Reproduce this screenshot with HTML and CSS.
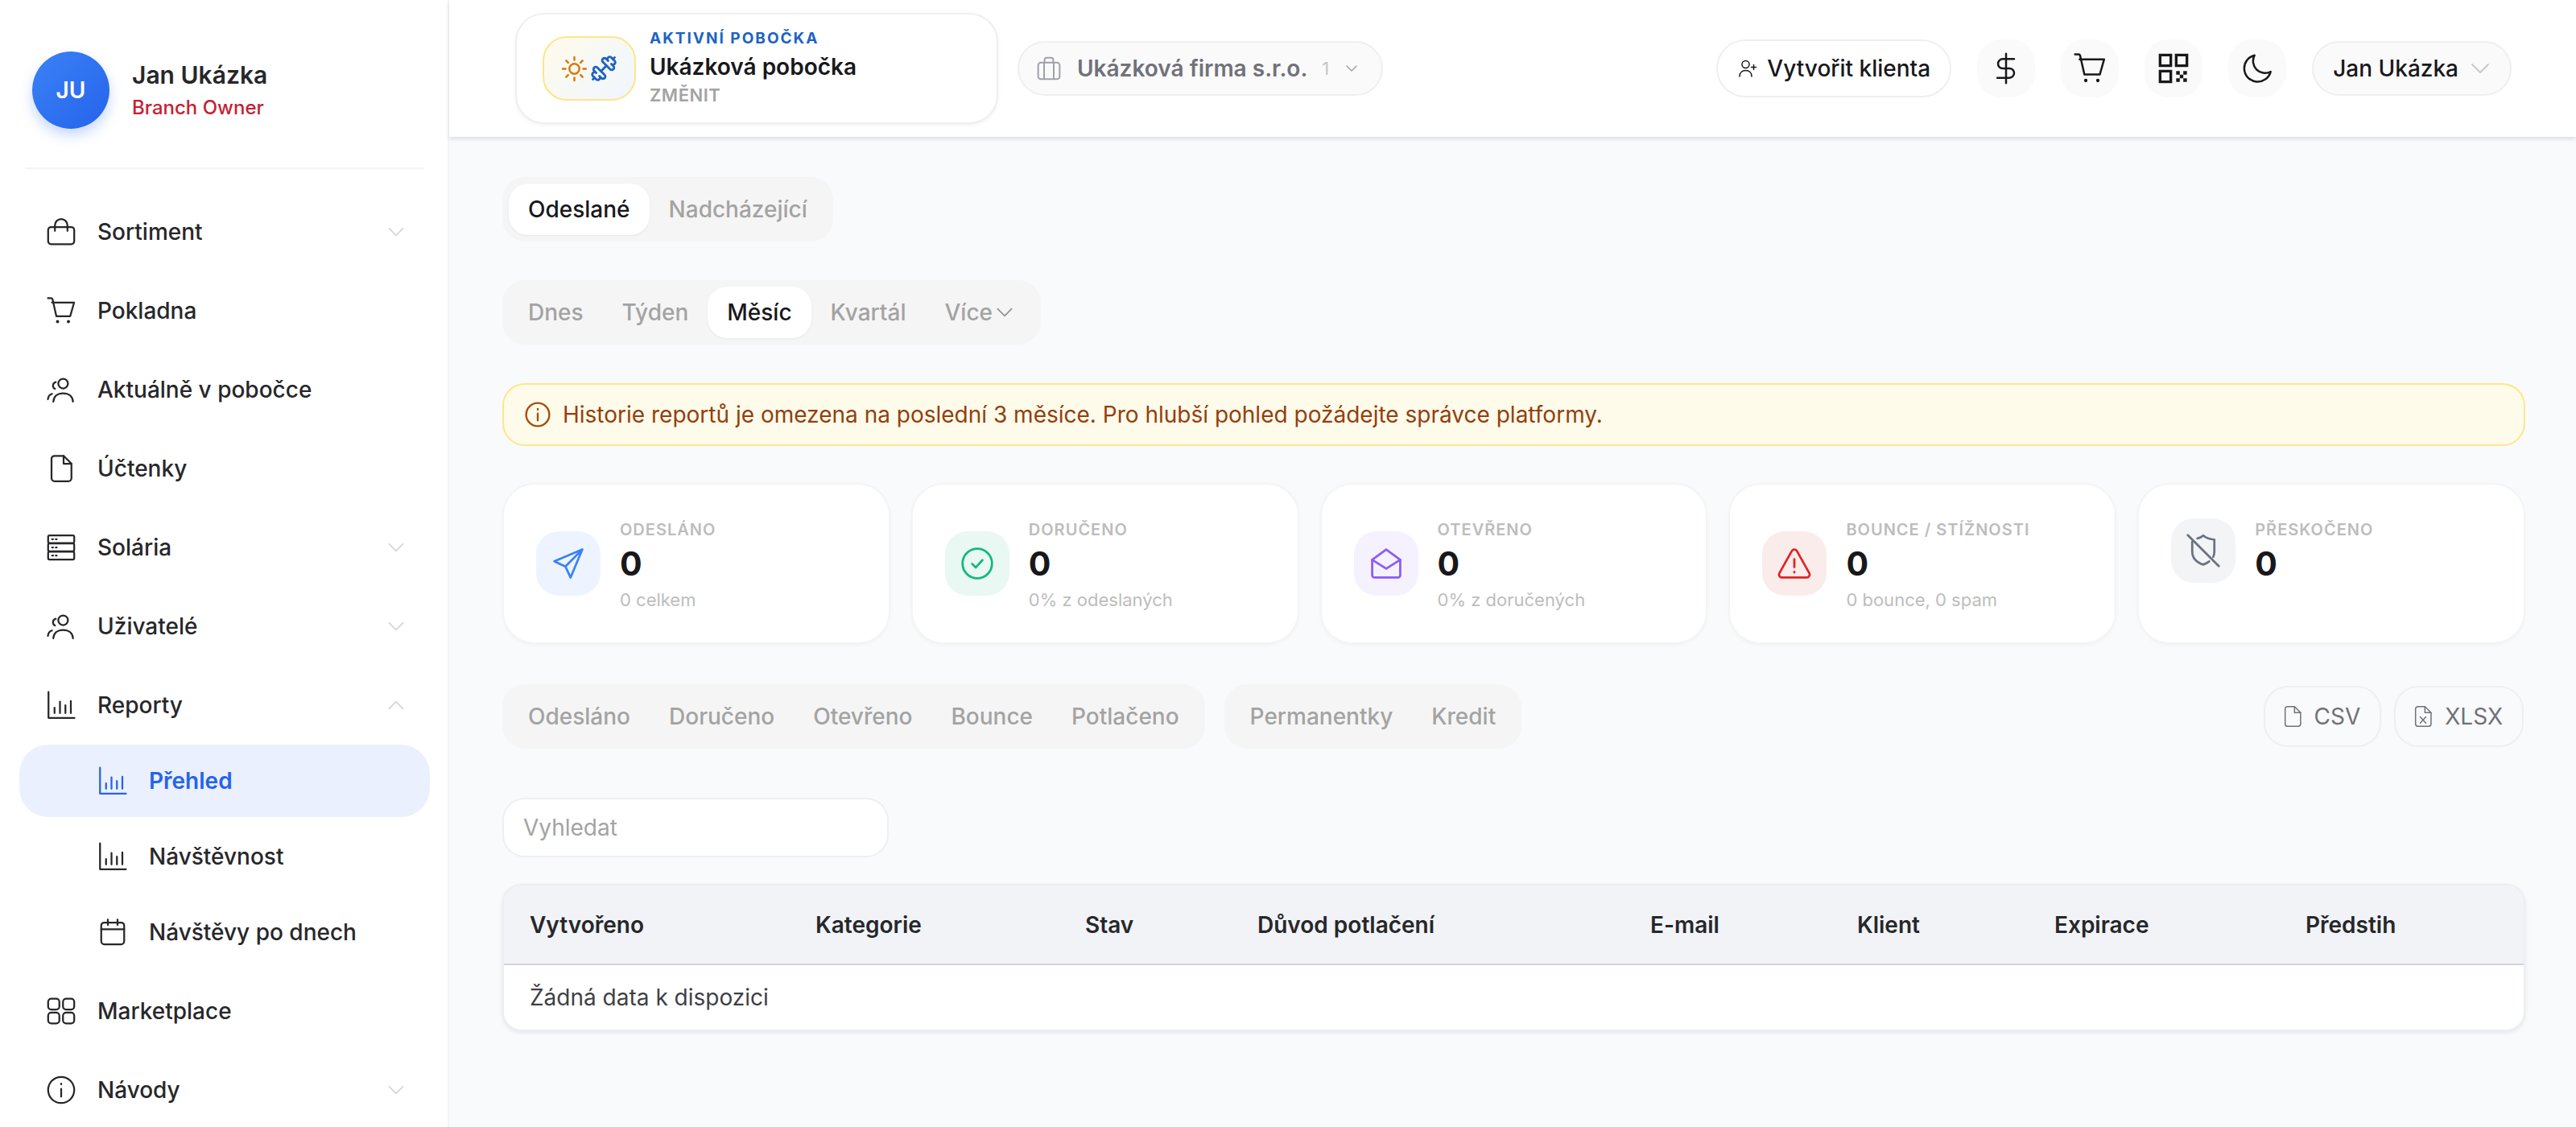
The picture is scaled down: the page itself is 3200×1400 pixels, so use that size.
FILE: index.html
```html
<!DOCTYPE html>
<html lang="cs">
<head>
    <meta charset="UTF-8">
    <title>Reporty</title>
    <link rel="stylesheet" href="styles.css">
</head>
<body>

    <svg class="defs" width="0" height="0">
        <symbol id="i-bag" viewBox="0 0 24 24"><rect x="1.2" y="8" width="21.6" height="14.2" rx="2.4"/><path d="M6.800 11.200V6.600a5.200 5.200 0 0 1 10.400 0v4.600"/></symbol>
        <symbol id="i-cart" viewBox="0 0 24 24"><path d="M1 1.500h2.600c.6 0 1 .3 1.200.9L8 16.500h11.500l3.200-11.300H4.400"/><circle cx="9" cy="21" r="1.300" class="dot"/><circle cx="18" cy="21" r="1.300" class="dot"/></symbol>
        <symbol id="i-users" viewBox="0 0 24 24"><circle cx="13.600" cy="7" r="4"/><path d="M5.500 22c.3-4.600 3.600-7 8.100-7s7.900 2.400 8.200 7"/><path d="M7.500 5.800a3 3 0 0 0-.6 5.600"/><path d="M1 20c.2-2.400 1.400-3.900 3.400-4.500"/></symbol>
        <symbol id="i-file" viewBox="0 0 24 24"><path d="M4 4a2.500 2.500 0 0 1 2.500-2.500H14L20.500 8v12a2.500 2.500 0 0 1-2.500 2.500H6.500A2.500 2.500 0 0 1 4 20z"/><path d="M14 1.500V8h6.500"/></symbol>
        <symbol id="i-server" viewBox="0 0 24 24"><rect x="1.200" y="2" width="21.600" height="6.400" rx="1.200"/><rect x="1.200" y="8.800" width="21.600" height="6.400" rx="1.200"/><rect x="1.200" y="15.600" width="21.600" height="6.400" rx="1.200"/><path d="M4.500 5.200h.8M7.500 5.200h.8M4.500 12h.8M7.500 12h.8M4.500 18.800h.8M7.500 18.800h.8"/></symbol>
        <symbol id="i-chart" viewBox="0 0 24 24"><path d="M1.500 1v21.500H23"/><path d="M6.500 14v4.500M11 9v9.500M15.500 12v6.500M20 8.500v10"/></symbol>
        <symbol id="i-calendar" viewBox="0 0 24 24"><rect x="2.500" y="4" width="19" height="18" rx="2.500"/><path d="M2.500 9.500h19M8 1.500V6M16 1.500V6"/></symbol>
        <symbol id="i-grid" viewBox="0 0 24 24"><rect x="1.200" y="1.800" width="9.300" height="9" rx="2.600"/><rect x="13.500" y="1.800" width="9.300" height="9" rx="2.600"/><rect x="1.200" y="13.200" width="9.300" height="9" rx="2.600"/><rect x="13.500" y="13.200" width="9.300" height="9" rx="2.600"/></symbol>
        <symbol id="i-info" viewBox="0 0 24 24"><circle cx="12" cy="12" r="10.800"/><path d="M12 11v6.500M12 6.800v.6"/></symbol>
        <symbol id="i-dollar" viewBox="0 0 24 24"><path d="M12 1v22M18 5H9.500a3.500 3.500 0 0 0 0 7h5a3.500 3.500 0 0 1 0 7H5.500"/></symbol>
        <symbol id="i-moon" viewBox="0 0 24 24"><path d="M22 14.500A10 10 0 1 1 10 2.200a9 9 0 0 0 12 12.300z"/></symbol>
        <symbol id="i-qr" viewBox="0 0 24 24"><path d="M2 2h8v8H2zM14 2h8v8h-8zM2 14h8v8H2z" class="square"/><path d="M14 14h2.700v2.700H14zM19.300 14H22v2.700h-2.700zM16.700 16.700h2.600v2.600h-2.600zM14 19.300h2.700V22H14zM19.300 19.300H22V22h-2.700z" class="dot"/></symbol>
        <symbol id="i-chevron" viewBox="0 0 24 24"><path d="M4 8l8 8 8-8"/></symbol>
        <symbol id="i-briefcase" viewBox="0 0 24 24"><rect x="2" y="6.500" width="20" height="15.500" rx="2.500"/><path d="M8 6.500V4a2 2 0 0 1 2-2h4a2 2 0 0 1 2 2v2.500M7.500 6.500V22M16.500 6.500V22"/></symbol>
        <symbol id="i-userplus" viewBox="0 0 24 24"><circle cx="9.500" cy="7" r="4.500"/><path d="M2 22c0-4.600 3-7.500 7.500-7.500s7.500 2.900 7.500 7.500M19.500 7.500v6M16.500 10.500h6"/></symbol>
        <symbol id="i-send" viewBox="0 0 24 24"><path d="M21.500 2.500 2.500 10.500l7.500 3.500 3.500 7.500zM21.500 2.500 10 14"/></symbol>
        <symbol id="i-check" viewBox="0 0 24 24"><circle cx="12" cy="12" r="10"/><path d="M8.500 12.200l2.500 2.500 4.500-5"/></symbol>
        <symbol id="i-mail" viewBox="0 0 24 24"><path d="M2.500 9.500 12 2.500l9.500 7V20a1.500 1.500 0 0 1-1.500 1.500H4A1.500 1.500 0 0 1 2.500 20z"/><path d="M2.500 9.500 12 15.500l9.500-6"/></symbol>
        <symbol id="i-alert" viewBox="0 0 24 24"><path d="M10.300 3.500 1.900 18.500A2 2 0 0 0 3.600 21.500h16.800a2 2 0 0 0 1.700-3L13.700 3.500a2 2 0 0 0-3.400 0z"/><path d="M12 9v5.500M12 17.600v.4"/></symbol>
        <symbol id="i-shield" viewBox="0 0 24 24"><path d="M8 3.800c1.500-.3 2.900-1 4-2 2.300 2 4.600 2.600 7.500 2.700v8c0 1.400-.2 2.700-.8 3.800M16 19.300c-1.100.9-2.500 1.700-4 2.200-4.400-1.500-7.500-4.500-7.500-9V6"/><path d="M1.500 1.500l21 21"/></symbol>
        <symbol id="i-filex" viewBox="0 0 24 24"><path d="M4 4a2.500 2.500 0 0 1 2.500-2.500H14L20.500 8v12a2.500 2.500 0 0 1-2.500 2.500H6.500A2.500 2.500 0 0 1 4 20z"/><path d="M14 1.500V8h6.500M9 12.500l6 6.500M15 12.500l-6 6.500"/></symbol>
        <symbol id="i-sun" viewBox="0 0 24 24"><circle cx="12" cy="12" r="4.500"/><path d="M12 1.500v2.500M12 20v2.500M1.500 12H4M20 12h2.500M4.600 4.600l1.800 1.800M17.600 17.600l1.800 1.800M4.600 19.400l1.800-1.800M17.600 6.400l1.800-1.800"/></symbol>
        <symbol id="i-dumbbell" viewBox="0 0 24 24"><g transform="matrix(-1 0 0 1 24 0)"><path d="M14.400 14.400 9.600 9.600"/><path d="M18.657 21.485a2 2 0 1 1-2.829-2.828l-1.767 1.768a2 2 0 1 1-2.829-2.829l6.364-6.364a2 2 0 1 1 2.829 2.829l-1.768 1.767a2 2 0 1 1 2.828 2.829z"/><path d="m21.500 21.500-1.400-1.400M3.900 3.900 2.500 2.500"/><path d="M6.404 12.768a2 2 0 1 1-2.829-2.829l1.768-1.767a2 2 0 1 1-2.828-2.829l2.828-2.828a2 2 0 1 1 2.829 2.828l1.767-1.768a2 2 0 1 1 2.829 2.829z"/></g></symbol>
    </svg>

    <div class="app">
        <aside class="sidebar">
            <div class="profile">
                <div class="avatar">JU</div>
                <div>
                    <div class="profile-name">Jan Ukázka</div>
                    <div class="profile-role">Branch Owner</div>
                </div>
            </div>

            <nav class="nav">
                <a class="nav-item"><svg class="icon"><use href="#i-bag"/></svg><span>Sortiment</span><svg class="nav-chevron"><use href="#i-chevron"/></svg></a>
                <a class="nav-item"><svg class="icon"><use href="#i-cart"/></svg><span>Pokladna</span></a>
                <a class="nav-item"><svg class="icon"><use href="#i-users"/></svg><span>Aktuálně v pobočce</span></a>
                <a class="nav-item"><svg class="icon"><use href="#i-file"/></svg><span>Účtenky</span></a>
                <a class="nav-item"><svg class="icon"><use href="#i-server"/></svg><span>Solária</span><svg class="nav-chevron"><use href="#i-chevron"/></svg></a>
                <a class="nav-item"><svg class="icon"><use href="#i-users"/></svg><span>Uživatelé</span><svg class="nav-chevron"><use href="#i-chevron"/></svg></a>
                <a class="nav-item"><svg class="icon"><use href="#i-chart"/></svg><span>Reporty</span><svg class="nav-chevron open"><use href="#i-chevron"/></svg></a>
                <div class="subnav">
                    <a class="nav-item sub active"><svg class="icon"><use href="#i-chart"/></svg><span>Přehled</span></a>
                    <a class="nav-item sub"><svg class="icon"><use href="#i-chart"/></svg><span>Návštěvnost</span></a>
                    <a class="nav-item sub"><svg class="icon"><use href="#i-calendar"/></svg><span>Návštěvy po dnech</span></a>
                </div>
                <a class="nav-item"><svg class="icon"><use href="#i-grid"/></svg><span>Marketplace</span></a>
                <a class="nav-item"><svg class="icon"><use href="#i-info"/></svg><span>Návody</span><svg class="nav-chevron"><use href="#i-chevron"/></svg></a>
            </nav>
        </aside>

        <div class="page">
            <header class="topbar">
                <div class="branch-card">
                    <div class="branch-logo">
                        <svg class="logo-sun"><use href="#i-sun"/></svg>
                        <svg class="logo-gym"><use href="#i-dumbbell"/></svg>
                    </div>
                    <div class="branch-text">
                        <div class="branch-label">AKTIVNÍ POBOČKA</div>
                        <div class="branch-name">Ukázková pobočka</div>
                        <div class="branch-change">ZMĚNIT</div>
                    </div>
                </div>
                <div class="company">
                    <svg class="company-icon"><use href="#i-briefcase"/></svg>
                    <span>Ukázková firma s.r.o.</span>
                    <span class="company-count">1</span>
                    <svg class="company-chevron"><use href="#i-chevron"/></svg>
                </div>

                <div class="topbar-right">
                    <button class="create-btn"><svg class="create-icon"><use href="#i-userplus"/></svg>Vytvořit klienta</button>
                    <button class="round-btn"><svg><use href="#i-dollar"/></svg></button>
                    <button class="round-btn"><svg><use href="#i-cart"/></svg></button>
                    <button class="round-btn"><svg><use href="#i-qr"/></svg></button>
                    <button class="round-btn"><svg><use href="#i-moon"/></svg></button>
                    <button class="user-btn">Jan Ukázka<svg class="user-chevron"><use href="#i-chevron"/></svg></button>
                </div>
            </header>

            <main class="content">
                <div class="tabs">
                    <span class="tab selected">Odeslané</span>
                    <span class="tab">Nadcházející</span>
                </div>

                <div class="tabs period">
                    <span class="tab">Dnes</span>
                    <span class="tab">Týden</span>
                    <span class="tab selected">Měsíc</span>
                    <span class="tab">Kvartál</span>
                    <span class="tab">Více<svg class="tab-chevron"><use href="#i-chevron"/></svg></span>
                </div>

                <div class="notice">
                    <svg class="notice-icon"><use href="#i-info"/></svg>
                    Historie reportů je omezena na poslední 3 měsíce. Pro hlubší pohled požádejte správce platformy.
                </div>

                <div class="stats">
                    <div class="stat">
                        <div class="stat-icon blue"><svg><use href="#i-send"/></svg></div>
                        <div>
                            <div class="stat-label">ODESLÁNO</div>
                            <div class="stat-value">0</div>
                            <div class="stat-sub">0 celkem</div>
                        </div>
                    </div>
                    <div class="stat">
                        <div class="stat-icon green"><svg><use href="#i-check"/></svg></div>
                        <div>
                            <div class="stat-label">DORUČENO</div>
                            <div class="stat-value">0</div>
                            <div class="stat-sub">0% z odeslaných</div>
                        </div>
                    </div>
                    <div class="stat">
                        <div class="stat-icon purple"><svg><use href="#i-mail"/></svg></div>
                        <div>
                            <div class="stat-label">OTEVŘENO</div>
                            <div class="stat-value">0</div>
                            <div class="stat-sub">0% z doručených</div>
                        </div>
                    </div>
                    <div class="stat">
                        <div class="stat-icon red"><svg><use href="#i-alert"/></svg></div>
                        <div>
                            <div class="stat-label">BOUNCE / STÍŽNOSTI</div>
                            <div class="stat-value">0</div>
                            <div class="stat-sub">0 bounce, 0 spam</div>
                        </div>
                    </div>
                    <div class="stat">
                        <div class="stat-icon gray"><svg><use href="#i-shield"/></svg></div>
                        <div>
                            <div class="stat-label">PŘESKOČENO</div>
                            <div class="stat-value">0</div>
                        </div>
                    </div>
                </div>

                <div class="filters">
                    <div class="tabs">
                        <span class="tab">Odesláno</span>
                        <span class="tab">Doručeno</span>
                        <span class="tab">Otevřeno</span>
                        <span class="tab">Bounce</span>
                        <span class="tab">Potlačeno</span>
                    </div>
                    <div class="tabs">
                        <span class="tab">Permanentky</span>
                        <span class="tab">Kredit</span>
                    </div>
                    <div class="exports">
                        <button class="export-btn"><svg><use href="#i-file"/></svg>CSV</button>
                        <button class="export-btn"><svg><use href="#i-filex"/></svg>XLSX</button>
                    </div>
                </div>

                <input class="search" type="text" placeholder="Vyhledat">

                <div class="table-wrap">
                    <table class="table">
                        <thead>
                            <tr>
                                <th class="col-created">Vytvořeno</th>
                                <th class="col-category">Kategorie</th>
                                <th class="col-state">Stav</th>
                                <th class="col-reason">Důvod potlačení</th>
                                <th class="col-email">E-mail</th>
                                <th class="col-client">Klient</th>
                                <th class="col-expiry">Expirace</th>
                                <th>Předstih</th>
                            </tr>
                        </thead>
                        <tbody>
                            <tr><td colspan="8">Žádná data k dispozici</td></tr>
                        </tbody>
                    </table>
                </div>
            </main>
        </div>
    </div>

</body>
</html>
```

FILE: styles.css
```css
/* General */
* {
    box-sizing: border-box;
}

body {
    margin: 0;
    height: 100vh;
    overflow: hidden;
    font-family: "Inter", sans-serif;
    font-size: 28px;
    color: #18181b;
    background: #f9fafb;
}

button {
    font: inherit;
    color: inherit;
    cursor: pointer;
    white-space: nowrap;
}

svg {
    fill: none;
    stroke: currentColor;
    stroke-width: 1.5;
    stroke-linecap: round;
    stroke-linejoin: round;
    flex-shrink: 0;
}

.defs {
    position: absolute;
}

.dot {
    fill: currentColor;
    stroke: none;
}

.square {
    stroke-width: 2;
    stroke-linecap: butt;
    stroke-linejoin: miter;
}

.icon {
    width: 36px;
    height: 36px;
}

.app {
    display: flex;
    height: 100%;
}

/* Sidebar */
.sidebar {
    width: 558px;
    flex-shrink: 0;
    background: #fff;
    border-right: 2px solid #f4f4f5;
    overflow: hidden;
}

.profile {
    display: flex;
    align-items: center;
    gap: 28px;
    height: 146px;
    margin: 64px 30px 0 32px;
    padding: 0 0 48px 8px;
    border-bottom: 2px solid #f4f4f5;
}

.avatar {
    width: 96px;
    height: 96px;
    border-radius: 50%;
    display: flex;
    align-items: center;
    justify-content: center;
    background: linear-gradient(135deg, #3b82f6, #2563eb);
    box-shadow: 0 8px 16px rgba(37, 99, 235, 0.25);
    color: #fff;
    font-weight: 600;
    font-size: 28px;
}

.profile-name {
    font-size: 30px;
    font-weight: 600;
    line-height: 40px;
    color: #27272a;
}

.profile-role {
    margin: 5px 0 2px;
    font-size: 24px;
    font-weight: 500;
    line-height: 32px;
    color: #c81e33;
}

.nav {
    display: flex;
    flex-direction: column;
    gap: 8px;
    padding: 33px 22px 0 24px;
}

.nav-item {
    display: flex;
    align-items: center;
    gap: 27px;
    height: 90px;
    padding: 0 29px 0 34px;
    font-weight: 500;
    color: #27272a;
    border-radius: 36px;
}

.nav-chevron {
    width: 26px;
    height: 26px;
    margin-left: auto;
    color: #d4d4d8;
}

.nav-chevron.open {
    transform: rotate(180deg);
}

.subnav {
    display: flex;
    flex-direction: column;
    gap: 4px;
    margin-top: -4px;
}

.nav-item.sub {
    padding-left: 98px;
}

.nav-item.active {
    background: #eaf0fd;
    color: #2563eb;
    font-weight: 600;
}

/* Top bar */
.page {
    flex: 1;
    min-width: 0;
}

.topbar {
    display: flex;
    align-items: center;
    height: 170px;
    padding: 0 80px 0 82px;
    background: #fff;
    box-shadow: 0 3px 5px rgba(30, 58, 110, 0.13);
}

.branch-card {
    display: flex;
    align-items: center;
    gap: 17px;
    width: 600px;
    height: 138px;
    padding-left: 32px;
    background: #fff;
    border: 2px solid #efeff1;
    border-radius: 36px;
    box-shadow: 0 2px 4px rgba(0, 0, 0, 0.05);
}

.branch-logo {
    display: flex;
    align-items: center;
    justify-content: center;
    gap: 3px;
    width: 116px;
    height: 80px;
    border: 2px solid #fde68a;
    border-radius: 30px;
    background: linear-gradient(135deg, #fffbeb, #eff6ff);
}

.logo-sun {
    width: 33px;
    height: 33px;
    color: #d97706;
    stroke-width: 1.8;
}

.logo-gym {
    width: 34px;
    height: 34px;
    color: #1d63c4;
    stroke-width: 2;
}

.branch-text {
    padding-bottom: 5px;
}

.branch-label {
    font-size: 19px;
    font-weight: 700;
    letter-spacing: 2px;
    line-height: 30px;
    color: #1d63c4;
}

.branch-name {
    font-size: 28px;
    font-weight: 600;
    line-height: 40px;
}

.branch-change {
    font-size: 22px;
    font-weight: 600;
    letter-spacing: 0.5px;
    line-height: 30px;
    color: #a3a3a3;
}

.company {
    display: flex;
    align-items: center;
    height: 68px;
    margin-left: 24px;
    padding: 0 28px 0 21px;
    background: #fafafa;
    border: 2px solid #efeff1;
    border-radius: 34px;
    font-weight: 600;
    color: #71717a;
}

.company-icon {
    width: 32px;
    height: 32px;
    margin-right: 19px;
    color: #a1a1aa;
}

.company-count {
    margin-left: 18px;
    font-size: 22px;
    font-weight: 400;
    color: #c4c4c8;
}

.company-chevron {
    width: 18px;
    height: 18px;
    margin-left: 19px;
    color: #a1a1aa;
    stroke-width: 2;
}

.topbar-right {
    display: flex;
    align-items: center;
    gap: 32px;
    margin-left: auto;
}

.create-btn {
    display: flex;
    align-items: center;
    gap: 12px;
    height: 72px;
    padding: 0 24px 0 25px;
    background: #fff;
    border: 2px solid #efeff1;
    border-radius: 36px;
    font-weight: 500;
}

.create-icon {
    width: 24px;
    height: 24px;
}

.round-btn {
    display: flex;
    align-items: center;
    justify-content: center;
    width: 72px;
    height: 72px;
    padding: 0;
    background: #fafafa;
    border: none;
    border-radius: 30px;
}

.round-btn svg {
    width: 40px;
    height: 40px;
}

.user-btn {
    display: flex;
    align-items: center;
    gap: 12px;
    height: 68px;
    padding: 0 22px 0 24px;
    background: #fafafa;
    border: 2px solid #efeff1;
    border-radius: 34px;
    font-weight: 500;
}

.user-chevron {
    width: 30px;
    height: 30px;
    color: #c8c8cc;
}

/* Content */
.content {
    display: flex;
    flex-direction: column;
    align-items: flex-start;
    padding: 50px 63px 0 66px;
}

.tabs {
    display: inline-flex;
    height: 80px;
    padding: 8px;
    background: #f5f5f5;
    border-radius: 28px;
}

.period {
    margin-top: 48px;
}

.tab {
    display: flex;
    align-items: center;
    padding: 0 24px;
    font-weight: 500;
    color: #a3a3a3;
    border-radius: 24px;
    white-space: nowrap;
}

.tab.selected {
    background: #fff;
    color: #18181b;
    box-shadow: 0 1px 3px rgba(0, 0, 0, 0.06);
}

.tab-chevron {
    width: 26px;
    height: 26px;
    margin-left: 2px;
    color: #8f8f8f;
}

.notice {
    display: flex;
    align-items: center;
    gap: 15px;
    width: 100%;
    height: 78px;
    margin-top: 48px;
    padding: 0 26px;
    background: #fffbeb;
    border: 2px solid #fde68a;
    border-radius: 28px;
    color: #92400e;
}

.notice-icon {
    width: 32px;
    height: 32px;
    color: #a84e0a;
    stroke-width: 1.8;
}

/* Stat cards */
.stats {
    display: grid;
    grid-template-columns: repeat(5, 1fr);
    gap: 26px;
    width: 100%;
    margin-top: 46px;
}

.stat {
    display: flex;
    align-items: flex-start;
    gap: 24px;
    height: 200px;
    padding: 40px;
    background: #fff;
    border: 2px solid #f4f4f5;
    border-radius: 40px;
    box-shadow: 0 2px 4px rgba(0, 0, 0, 0.03);
}

.stat-icon {
    display: flex;
    align-items: center;
    justify-content: center;
    width: 80px;
    height: 80px;
    margin-top: 18px;
    border-radius: 28px;
}

.stat:last-child .stat-icon {
    margin-top: 2px;
}

.stat-icon svg {
    width: 44px;
    height: 44px;
}

.stat-icon.blue {
    background: #eef4ff;
    color: #3b82f6;
}

.stat-icon.green {
    background: #e9f8f2;
    color: #10b981;
}

.stat-icon.purple {
    background: #f5f1ff;
    color: #8b5cf6;
}

.stat-icon.red {
    background: #fbecec;
    color: #dc2626;
}

.stat-icon.gray {
    background: #f3f4f6;
    color: #6b7280;
}

.stat-label {
    margin-top: 2px;
    font-size: 20px;
    font-weight: 600;
    line-height: 28px;
    letter-spacing: 1px;
    color: #bdbdbd;
}

.stat-value {
    margin-top: 4px;
    font-size: 41px;
    font-weight: 700;
    line-height: 48px;
    color: #18181b;
}

.stat-sub {
    margin-top: 7px;
    font-size: 22px;
    line-height: 28px;
    color: #bdbdbd;
}

/* Filters */
.filters {
    display: flex;
    align-items: center;
    gap: 24px;
    width: 100%;
    margin-top: 50px;
}

.exports {
    display: flex;
    gap: 16px;
    margin-left: auto;
    margin-right: 2px;
}

.export-btn {
    display: flex;
    align-items: center;
    gap: 13px;
    height: 76px;
    padding: 0 24px 0 20px;
    background: transparent;
    border: 2px solid #efeff1;
    border-radius: 30px;
    color: #71717a;
    font-weight: 400;
}

.export-btn svg {
    width: 28px;
    height: 28px;
    stroke-width: 1.3;
}

.search {
    width: 480px;
    height: 74px;
    margin-top: 61px;
    padding: 0 24px;
    background: #fff;
    border: 2px solid #efeff1;
    border-radius: 28px;
    font: inherit;
    color: #18181b;
}

.search::placeholder {
    color: #a3a3a3;
}

/* Table */
.table-wrap {
    width: 100%;
    margin-top: 33px;
    background: #fff;
    border: 2px solid #eceef1;
    border-radius: 24px;
    box-shadow: 0 2px 5px rgba(30, 58, 110, 0.1);
    overflow: hidden;
}

.table {
    width: 100%;
    border-collapse: collapse;
    table-layout: fixed;
}

.table th {
    height: 98px;
    padding: 0 32px;
    text-align: left;
    font-weight: 570;
    background: #f1f3f7;
    border-bottom: 2px solid #d4d4d8;
    color: #27272a;
}

.table td {
    height: 81px;
    padding: 0 32px;
    color: #3f3f46;
}

.col-created { width: 355px; }
.col-category { width: 335px; }
.col-state { width: 214px; }
.col-reason { width: 488px; }
.col-email { width: 257px; }
.col-client { width: 245px; }
.col-expiry { width: 312px; }
```
